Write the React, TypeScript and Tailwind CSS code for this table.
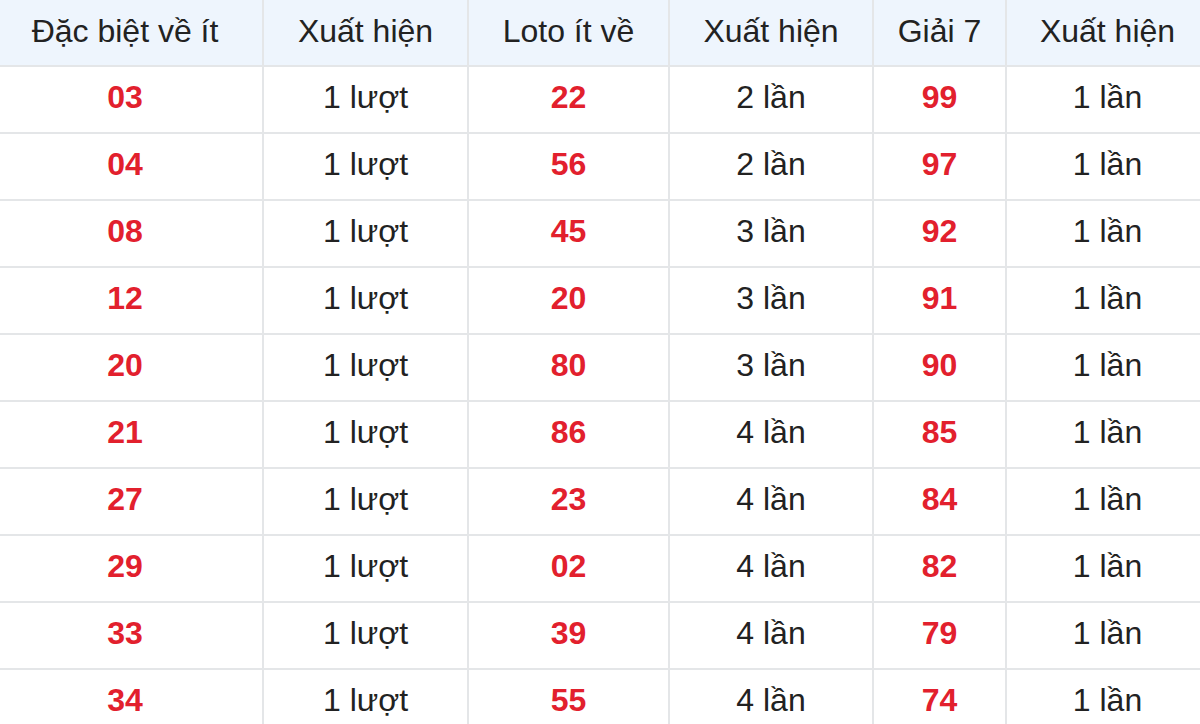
import React from "react";

const rows: [string, string, string, string, string, string][] = [
  ["03", "1 lượt", "22", "2 lần", "99", "1 lần"],
  ["04", "1 lượt", "56", "2 lần", "97", "1 lần"],
  ["08", "1 lượt", "45", "3 lần", "92", "1 lần"],
  ["12", "1 lượt", "20", "3 lần", "91", "1 lần"],
  ["20", "1 lượt", "80", "3 lần", "90", "1 lần"],
  ["21", "1 lượt", "86", "4 lần", "85", "1 lần"],
  ["27", "1 lượt", "23", "4 lần", "84", "1 lần"],
  ["29", "1 lượt", "02", "4 lần", "82", "1 lần"],
  ["33", "1 lượt", "39", "4 lần", "79", "1 lần"],
  ["34", "1 lượt", "55", "4 lần", "74", "1 lần"],
];

const headers = ["Đặc biệt về ít", "Xuất hiện", "Loto ít về", "Xuất hiện", "Giải 7", "Xuất hiện"];
const widths = ["w-[275px]", "w-[205px]", "w-[201px]", "w-[204px]", "w-[133px]", "w-[202px]"];

export default function App() {
  return (
    <div className="w-[1200px] h-[724px] overflow-hidden bg-white" style={{ fontFamily: '"Liberation Sans", Arial, sans-serif' }}>
      <table className="ml-[-12px] w-[1220px] table-fixed border-collapse text-[32px] text-[#222222]">
        <colgroup>
          {widths.map((w, i) => (
            <col key={i} className={w} />
          ))}
        </colgroup>
        <thead>
          <tr className="h-[66px] bg-[#eef5fd]">
            {headers.map((h, i) => (
              <th key={i} className="border-2 border-[#e4e6e8] border-t-0 font-normal text-center align-middle leading-none pb-[4px] first:border-l-0 last:border-r-0">
                {h}
              </th>
            ))}
          </tr>
        </thead>
        <tbody>
          {rows.map((r, ri) => (
            <tr key={ri} className="h-[67px]">
              {r.map((c, ci) => (
                <td
                  key={ci}
                  className={
                    "border-2 border-[#e4e6e8] text-center align-middle leading-none pb-[5px] first:border-l-0 last:border-r-0 " +
                    (ci % 2 === 0 ? "font-bold text-[#e2202d]" : "")
                  }
                >
                  {c}
                </td>
              ))}
            </tr>
          ))}
        </tbody>
      </table>
    </div>
  );
}
